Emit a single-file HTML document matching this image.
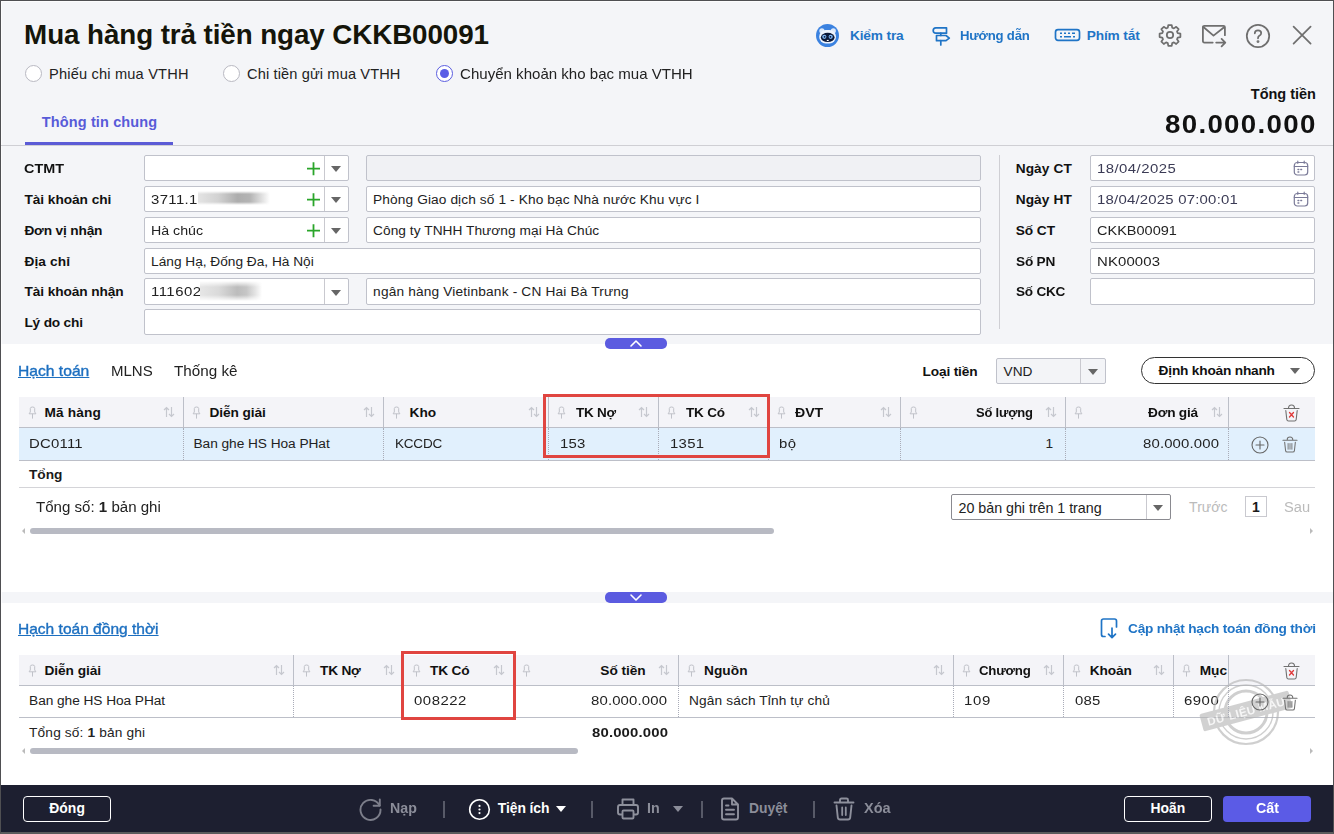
<!DOCTYPE html>
<html lang="vi"><head><meta charset="utf-8"><title>Mua hàng trả tiền ngay</title>
<style>
*{box-sizing:border-box;margin:0;padding:0}
html,body{width:1334px;height:834px;overflow:hidden;background:#f4f5f8}
body{font-family:"Liberation Sans",sans-serif;color:#1a1a1a;font-size:14px;position:relative}
.a{position:absolute;white-space:nowrap}
.b{font-weight:bold}
#frame{position:absolute;left:0;top:0;width:1334px;height:834px;border:1px solid #4f4f52;border-bottom:2px solid #5a5a5c;pointer-events:none;z-index:50}
.title{left:25px;top:19px;font-size:27.800px;font-weight:bold;color:#15150a;line-height:32px}
.radio{width:17px;height:17px;border-radius:50%;border:1px solid #b9b9c2;background:#fff}
.radio.on{border:1.5px solid #5a5de0}
.radio.on:after{content:"";position:absolute;left:2.500px;top:2.800px;width:9px;height:9px;border-radius:50%;background:#5a5de6}
.rl{font-size:14.600px;line-height:20px;color:#222}
.tl{font-size:13.700px;font-weight:bold;color:#1f74c6;line-height:20px}
.lbl{font-size:13.700px;font-weight:bold;line-height:20px;color:#111}
.inp{background:#fff;border:1px solid #c0c2cb;border-radius:2px;height:26px}
.inp.dis{background:#f0f1f4}
.sep{width:1px;background:#c9c9cf}
.tri{width:0;height:0;border-left:5px solid transparent;border-right:5px solid transparent;border-top:6px solid #666}
.white{background:#fff}
.lbl,.it{margin-top:.6px}
.th{margin-top:1px}
.th{font-size:13.700px;font-weight:bold;line-height:30px;color:#111}
.td{font-size:13.700px;line-height:32px;color:#222}
.vl{width:1px;background:#bcbfc8}
.dl{width:0;border-left:1px dotted #a9acb8}
.hl{height:1px;background:#bcbfc8}
.it{font-size:13.700px;line-height:26px;color:#222}
.fb{font-size:13.900px;font-weight:bold;line-height:20px}
</style></head><body>
<div id="frame"></div>
<div class="a" style="left:1px;top:1px;width:1332px;height:1px;background:#fcfcfd"></div><div class="a" style="left:1px;top:1px;width:1px;height:784px;background:#fcfcfd"></div>

<!-- header -->
<div class="a title" style="right: auto; width: auto; text-align: left; padding-left: 0px; letter-spacing: -0.1px; left: 24.1px;">Mua hàng trả tiền ngay CKKB00091</div>

<div class="a radio" style="left:25px;top:65px"></div><div class="a rl" style="left: 49.1px; top: 64px; right: auto; width: auto; text-align: left; padding-left: 0px; letter-spacing: 0.18px;">Phiếu chi mua VTHH</div>
<div class="a radio" style="left:223px;top:65px"></div><div class="a rl" style="left: 247.1px; top: 64px; right: auto; width: auto; text-align: left; padding-left: 0px; letter-spacing: 0.12px;">Chi tiền gửi mua VTHH</div>
<div class="a radio on" style="left:436px;top:65px"></div><div class="a rl" style="left: 459.8px; top: 64px; right: auto; width: auto; text-align: left; padding-left: 0px; letter-spacing: 0px; transform-origin: 0px 50%; transform: scaleX(1.032);">Chuyển khoản kho bạc mua VTHH</div>

<div class="a b" style="left: 41.8px; top: 112px; font-size: 14.5px; line-height: 20px; color: rgb(88, 91, 216); right: auto; width: auto; text-align: left; padding-left: 0px; letter-spacing: 0.13px;">Thông tin chung</div>
<div class="a" style="left:25px;top:142px;width:148px;height:3px;background:#5b5bd6"></div>
<div class="a" style="left:1px;top:145px;width:1332px;height:1px;background:#cfcfd4"></div>

<div class="a b" style="right: auto; top: 84px; font-size: 14.5px; line-height: 20px; color: rgb(17, 17, 17); width: auto; text-align: left; padding-left: 0px; letter-spacing: -0.02px; left: 1250.8px;">Tổng tiền</div>
<div class="a b" style="right: auto; top: 108.2px; font-size: 25.4px; line-height: 32px; color: rgb(17, 17, 17); width: auto; text-align: left; padding-left: 0px; letter-spacing: 1.2px; transform-origin: 0px 50%; transform: scaleX(1.09); left: 1164.9px;">80.000.000</div>

<!-- toolbar -->
<svg class="a" style="left:816px;top:24px" width="23" height="23" viewBox="0 0 23 23"><circle cx="11.500" cy="11.500" r="11.500" fill="#3b82e0"></circle><circle cx="5.900" cy="6.800" r="2.600" fill="#dbe8fa"></circle><circle cx="17.300" cy="6.800" r="2.600" fill="#dbe8fa"></circle><rect x="3.200" y="6" width="16.800" height="13.400" rx="6.500" fill="#eef4fd"></rect><ellipse cx="11.700" cy="13.400" rx="6.900" ry="4.600" fill="#0b1838"></ellipse><circle cx="8.300" cy="12.800" r="2.100" fill="#7fb8f5"></circle><circle cx="14.700" cy="12.800" r="2.100" fill="#7fb8f5"></circle><circle cx="8.600" cy="12.800" r="0.900" fill="#0b1838"></circle><circle cx="14.400" cy="12.800" r="0.900" fill="#0b1838"></circle><rect x="10.800" y="15.900" width="1.900" height="1.100" fill="#fff"></rect></svg>
<div class="a tl" style="left: 849.9px; top: 26px; right: auto; width: auto; text-align: left; padding-left: 0px; letter-spacing: -0.14px;">Kiểm tra</div>
<svg class="a" style="left:930px;top:25px" width="22" height="22" viewBox="0 0 22 22" fill="none" stroke="#1f74c6" stroke-width="1.700" stroke-linejoin="round" stroke-linecap="round"><path d="M5.800 2.800H16.500V8.200H5.800Q3.200 8.200 3.200 5.500Q3.200 2.800 5.800 2.800Z"></path><path d="M6.500 10.500H16L19.300 13.100L16 15.700H6.500Z"></path><path d="M10.800 8.200V10.500M10.800 15.700V20"></path></svg>
<div class="a tl" style="left: 960.3px; top: 26px; right: auto; width: auto; text-align: left; padding-left: 0px; letter-spacing: -0.22px; transform-origin: 0px 50%; transform: scaleX(0.961);">Hướng dẫn</div>
<svg class="a" style="left:1054px;top:28px" width="27" height="14" viewBox="0 0 27 14" fill="none" stroke="#1f74c6" stroke-width="1.7"><rect x="1.500" y="1.700" width="24" height="10.600" rx="2.500"></rect><path d="M6 5.200h2M10 5.200h2M14 5.200h2M18 5.200h3M6 8.800h2M10 8.800h7M19 8.800h2" stroke-width="1.600"></path></svg>
<div class="a tl" style="left: 1086.7px; top: 26px; right: auto; width: auto; text-align: left; padding-left: 0px; letter-spacing: -0.14px;">Phím tắt</div>
<svg class="a" style="left:1158px;top:23px" width="24" height="24" viewBox="0 0 24 24" fill="none" stroke="#6f6f6f" stroke-width="1.750" stroke-linejoin="round"><circle cx="12" cy="12" r="3.200"></circle><path d="M10.300 2h3.400l.5 2.700 1.700.7 2.300-1.600 2.400 2.400-1.600 2.300.7 1.700 2.700.5v3.400l-2.700.5-.7 1.700 1.600 2.300-2.400 2.400-2.300-1.600-1.700.7-.5 2.700h-3.400l-.5-2.700-1.700-.7-2.300 1.600-2.400-2.400 1.600-2.300-.7-1.700-2.700-.5v-3.400l2.700-.5.7-1.700-1.600-2.300 2.400-2.400 2.300 1.600 1.700-.7z"></path></svg>
<svg class="a" style="left:1201px;top:24px" width="27" height="24" viewBox="0 0 27 24" fill="none" stroke="#6f6f6f" stroke-width="1.800" stroke-linejoin="round" stroke-linecap="round"><path d="M11.700 18.600H3.400Q1.900 18.600 1.900 17.100V3.300Q1.900 1.800 3.400 1.800H22.400Q23.900 1.800 23.900 3.300V11.200"></path><path d="M2.400 3L12.500 11.600L23.400 3"></path><path d="M15.200 18.600H24.200M20.600 14.900L24.300 18.600L20.600 22.300"></path></svg>
<svg class="a" style="left:1245px;top:23px" width="26" height="26" viewBox="0 0 26 26" fill="none" stroke="#6f6f6f" stroke-width="1.750" stroke-linecap="round"><circle cx="13" cy="13" r="11.200"></circle><path d="M9.800 10.300Q9.800 7.300 13 7.300Q16.200 7.300 16.200 10Q16.200 11.800 14.300 12.800Q13 13.500 13 15.300"></path><circle cx="13" cy="18.600" r="0.600" fill="#6f6f6f"></circle></svg>
<svg class="a" style="left:1291px;top:24px" width="22" height="22" viewBox="0 0 22 22" fill="none" stroke="#6f6f6f" stroke-width="1.750" stroke-linecap="round"><path d="M2.600 2.600L19.600 19.600M19.600 2.600L2.600 19.600"></path></svg>

<!-- form left -->
<div class="a lbl" style="left: 24.4px; top: 158px; right: auto; width: auto; text-align: left; padding-left: 0px; letter-spacing: 0px; transform-origin: 0px 50%; transform: scaleX(1.052);">CTMT</div>
<div class="a lbl" style="left: 24.4px; top: 189px; right: auto; width: auto; text-align: left; padding-left: 0px; letter-spacing: -0.04px;">Tài khoản chi</div>
<div class="a lbl" style="left: 24.4px; top: 220px; right: auto; width: auto; text-align: left; padding-left: 0px; letter-spacing: -0.16px;">Đơn vị nhận</div>
<div class="a lbl" style="left: 24.4px; top: 251px; right: auto; width: auto; text-align: left; padding-left: 0px; letter-spacing: 0.13px;">Địa chỉ</div>
<div class="a lbl" style="left: 24.4px; top: 281.4px; right: auto; width: auto; text-align: left; padding-left: 0px; letter-spacing: -0.08px;">Tài khoản nhận</div>
<div class="a lbl" style="left: 24.4px; top: 312px; right: auto; width: auto; text-align: left; padding-left: 0px; letter-spacing: -0.18px;">Lý do chi</div>

<div class="a inp" style="left:144px;top:155px;width:205px"></div>
<div class="a inp" style="left:144px;top:186px;width:205px"></div><div class="a it" style="left: 151.1px; top: 186px; right: auto; width: auto; text-align: left; padding-left: 0px; letter-spacing: 0.34px; transform-origin: 0px 50%; transform: scaleX(1.09);">3711.1</div>
<div class="a inp" style="left:144px;top:217px;width:205px"></div><div class="a it" style="left: 151.1px; top: 217px; right: auto; width: auto; text-align: left; padding-left: 0px; letter-spacing: 0px; transform-origin: 0px 50%; transform: scaleX(1.037);">Hà chúc</div>
<div class="a inp" style="left:144px;top:248px;width:837px"></div><div class="a it" style="left: 151.1px; top: 248px; right: auto; width: auto; text-align: left; padding-left: 0px; letter-spacing: -0.01px;">Láng Hạ, Đống Đa, Hà Nội</div>
<div class="a inp" style="left:144px;top:278px;width:205px;height:27px"></div><div class="a it" style="left: 151.1px; top: 278px; right: auto; width: auto; text-align: left; padding-left: 0px; letter-spacing: 0.45px; transform-origin: 0px 50%; transform: scaleX(1.09);">111602</div>
<div class="a inp" style="left:144px;top:309px;width:837px"></div>

<div class="a inp dis" style="left:366px;top:155px;width:615px"></div>
<div class="a inp" style="left:366px;top:186px;width:615px"></div><div class="a it" style="left: 373.1px; top: 186px; right: auto; width: auto; text-align: left; padding-left: 0px; letter-spacing: 0.11px;">Phòng Giao dịch số 1 - Kho bạc Nhà nước Khu vực I</div>
<div class="a inp" style="left:366px;top:217px;width:615px"></div><div class="a it" style="left: 373.1px; top: 217px; right: auto; width: auto; text-align: left; padding-left: 0px; letter-spacing: 0.05px;">Công ty TNHH Thương mại Hà Chúc</div>
<div class="a inp" style="left:366px;top:278px;width:615px;height:27px"></div><div class="a it" style="left: 373.1px; top: 278px; right: auto; width: auto; text-align: left; padding-left: 0px; letter-spacing: 0.17px;">ngân hàng Vietinbank - CN Hai Bà Trưng</div>

<!-- blur blobs -->
<div class="a" style="left:198px;top:191px;width:72px;height:14px;background:linear-gradient(90deg,#e4e4e4 0,#d2d2d2 28%,#adadad 55%,#b4b4b4 72%,#dedede 88%,rgba(255,255,255,0) 100%);-webkit-mask-image:linear-gradient(180deg,transparent 0,#000 22%,#000 78%,transparent 100%);mask-image:linear-gradient(180deg,transparent 0,#000 22%,#000 78%,transparent 100%)"></div>
<div class="a" style="left:200px;top:280.500px;width:62px;height:20px;background:linear-gradient(90deg,#e6e6e6 0,#dadada 30%,#bcbcbc 60%,#c6c6c6 75%,#e6e6e6 90%,rgba(255,255,255,0) 100%);-webkit-mask-image:linear-gradient(180deg,transparent 0,#000 30%,#000 70%,transparent 100%);mask-image:linear-gradient(180deg,transparent 0,#000 30%,#000 70%,transparent 100%)"></div>

<!-- combo parts -->
<div class="a sep" style="left:324px;top:156px;height:24px"></div>
<div class="a sep" style="left:324px;top:187px;height:24px"></div>
<div class="a sep" style="left:324px;top:218px;height:24px"></div>
<div class="a sep" style="left:324px;top:279px;height:25px"></div>
<div class="a tri" style="left:331px;top:166px"></div>
<div class="a tri" style="left:331px;top:197px"></div>
<div class="a tri" style="left:331px;top:228px"></div>
<div class="a tri" style="left:331px;top:289.500px"></div>
<svg class="a" style="left:306px;top:161px" width="15" height="15" viewBox="0 0 15 15" stroke="#2aa52a" stroke-width="1.800"><path d="M7.500 1.200V14.300M1 7.700H14"></path></svg>
<svg class="a" style="left:306px;top:192px" width="15" height="15" viewBox="0 0 15 15" stroke="#2aa52a" stroke-width="1.800"><path d="M7.500 1.200V14.300M1 7.700H14"></path></svg>
<svg class="a" style="left:306px;top:223px" width="15" height="15" viewBox="0 0 15 15" stroke="#2aa52a" stroke-width="1.800"><path d="M7.500 1.200V14.300M1 7.700H14"></path></svg>

<!-- form right -->
<div class="a sep" style="left:999px;top:155px;height:174px;background:#cfcfd4"></div>
<div class="a lbl" style="left: 1015.7px; top: 158px; right: auto; width: auto; text-align: left; padding-left: 0px; letter-spacing: 0.09px;">Ngày CT</div>
<div class="a lbl" style="left: 1015.7px; top: 189px; right: auto; width: auto; text-align: left; padding-left: 0px; letter-spacing: 0.09px;">Ngày HT</div>
<div class="a lbl" style="left: 1015.7px; top: 220px; right: auto; width: auto; text-align: left; padding-left: 0px; letter-spacing: -0.06px;">Số CT</div>
<div class="a lbl" style="left: 1015.7px; top: 251px; right: auto; width: auto; text-align: left; padding-left: 0px; letter-spacing: -0.22px; transform-origin: 0px 50%; transform: scaleX(0.997);">Số PN</div>
<div class="a lbl" style="left: 1015.7px; top: 281.4px; right: auto; width: auto; text-align: left; padding-left: 0px; letter-spacing: -0.22px; transform-origin: 0px 50%; transform: scaleX(0.991);">Số CKC</div>
<div class="a inp" style="left:1090px;top:155px;width:225px;"></div><div class="a it" style="left: 1096.7px; top: 155px; color: rgb(59, 59, 85); right: auto; width: auto; text-align: left; padding-left: 0px; letter-spacing: 0.42px; transform-origin: 0px 50%; transform: scaleX(1.09);">18/04/2025</div>
<div class="a inp" style="left:1090px;top:186px;width:225px;"></div><div class="a it" style="left: 1096.7px; top: 186px; color: rgb(59, 59, 85); right: auto; width: auto; text-align: left; padding-left: 0px; letter-spacing: 0.2px; transform-origin: 0px 50%; transform: scaleX(1.09);">18/04/2025 07:00:01</div>
<div class="a inp" style="left:1090px;top:217px;width:225px"></div><div class="a it" style="left: 1096.5px; top: 217px; right: auto; width: auto; text-align: left; padding-left: 0px; letter-spacing: 0px; transform-origin: 0px 50%; transform: scaleX(1.06);">CKKB00091</div>
<div class="a inp" style="left:1090px;top:248px;width:225px"></div><div class="a it" style="left: 1096.5px; top: 248px; right: auto; width: auto; text-align: left; padding-left: 0px; letter-spacing: 0.12px; transform-origin: 0px 50%; transform: scaleX(1.09);">NK00003</div>
<div class="a inp" style="left:1090px;top:278px;width:225px;height:27px"></div>
<svg class="a cal" style="left:1293px;top:160px" width="16" height="16" viewBox="0 0 16 16" fill="none" stroke="#7a7a98" stroke-width="1.200" stroke-linecap="round"><rect x="1.300" y="2.500" width="13.400" height="12.500" rx="3"></rect><path d="M1.300 6.500H14.700M4.800 1.200V3.300M11.200 1.200V3.300"></path><path d="M5 9.500h.8M7.800 9.500h.8M5 12h.8" stroke-width="1.400"></path></svg>
<svg class="a cal" style="left:1293px;top:191px" width="16" height="16" viewBox="0 0 16 16" fill="none" stroke="#7a7a98" stroke-width="1.200" stroke-linecap="round"><rect x="1.300" y="2.500" width="13.400" height="12.500" rx="3"></rect><path d="M1.300 6.500H14.700M4.800 1.200V3.300M11.200 1.200V3.300"></path><path d="M5 9.500h.8M7.800 9.500h.8M5 12h.8" stroke-width="1.400"></path></svg>

<!-- white area 1 -->
<div class="a white" style="left:1px;top:344px;width:1332px;height:248px"></div>
<div class="a" style="left:605px;top:338px;width:62px;height:11px;border-radius:5px;background:#5b5be0"></div>
<svg class="a" style="left:629px;top:339px" width="14" height="9" viewBox="0 0 14 9" fill="none" stroke="#fff" stroke-width="1.600" stroke-linecap="round" stroke-linejoin="round"><path d="M2 7L7 2L12 7"></path></svg>

<div class="a" style="left: 18.1px; top: 361px; font-size: 14.5px; line-height: 20px; color: rgb(28, 111, 192); text-decoration: underline; -webkit-text-stroke: 0.35px rgb(28, 111, 192); right: auto; width: auto; text-align: left; padding-left: 0px; letter-spacing: 0px; transform-origin: 0px 50%; transform: scaleX(1.079);">Hạch toán</div>
<div class="a" style="left: 110.5px; top: 361px; font-size: 14.5px; line-height: 20px; color: rgb(34, 34, 34); right: auto; width: auto; text-align: left; padding-left: 0px; letter-spacing: 0px; transform-origin: 0px 50%; transform: scaleX(1.035);">MLNS</div>
<div class="a" style="left: 173.9px; top: 361px; font-size: 14.5px; line-height: 20px; color: rgb(34, 34, 34); right: auto; width: auto; text-align: left; padding-left: 0px; letter-spacing: 0px; transform-origin: 0px 50%; transform: scaleX(1.05);">Thống kê</div>

<div class="a lbl" style="left: 922.6px; top: 361px; right: auto; width: auto; text-align: left; padding-left: 0px; letter-spacing: -0.17px;">Loại tiền</div>
<div class="a inp" style="left:996px;top:358px;width:110px;background:#f3f4f7"></div><div class="a it" style="left: 1003.6px; top: 358px; right: auto; width: auto; text-align: left; padding-left: 0px; letter-spacing: 0px;">VND</div>
<div class="a sep" style="left:1080px;top:359px;height:24px"></div>
<div class="a tri" style="left:1088px;top:369px"></div>
<div class="a" style="left:1141px;top:357px;width:174px;height:27px;border:1px solid #333;border-radius:14px;background:#fff"></div>
<div class="a lbl" style="left: 1158.6px; top: 360px; right: auto; width: auto; text-align: left; padding-left: 0px; letter-spacing: -0.2px;">Định khoản nhanh</div>
<div class="a tri" style="left:1290px;top:368px"></div>

<!-- table 1 -->
<div class="a" style="left:19px;top:397px;width:1296px;height:30px;background:#f4f4f8"></div>
<div class="a" style="left:19px;top:428px;width:1296px;height:32px;background:#e1f0fd"></div>
<div class="a hl" style="left:19px;top:427px;width:1296px"></div>
<div class="a hl" style="left:19px;top:460px;width:1296px"></div>
<div class="a hl" style="left:19px;top:487px;width:1296px;background:#d4d4d8"></div>
<!--T1-->
<svg class="a" style="left:28px;top:406px" width="9" height="13" viewBox="0 0 9 13" fill="none" stroke="#c0c2c9" stroke-width="1"><path d="M2.300 2.500Q2.300 1 4.500 1Q6.700 1 6.700 2.500V6L7.900 7.800H1.100L2.300 6ZM4.500 7.800V12.600"></path></svg>
<div class="a th" style="left: 44.4px; top: 397px; right: auto; width: auto; text-align: left; padding-left: 0px; letter-spacing: 0.16px;">Mã hàng</div>
<svg class="a" style="left:163.3px;top:406px" width="12" height="12" viewBox="0 0 12 12" fill="none" stroke="#c6c8cf" stroke-width="1.200"><path d="M3.500 11V1.500M1 4L3.500 1.500L6 4M8.500 1V10.500M6 8L8.500 10.500L11 8"></path></svg>
<div class="a td" style="left: 28.9px; top: 428px; right: auto; width: auto; text-align: left; padding-left: 0px; letter-spacing: 0.2px; transform-origin: 0px 50%; transform: scaleX(1.09);">DC0111</div>
<svg class="a" style="left:192px;top:406px" width="9" height="13" viewBox="0 0 9 13" fill="none" stroke="#c0c2c9" stroke-width="1"><path d="M2.300 2.500Q2.300 1 4.500 1Q6.700 1 6.700 2.500V6L7.900 7.800H1.100L2.300 6ZM4.500 7.800V12.600"></path></svg>
<div class="a th" style="left: 209.4px; top: 397px; right: auto; width: auto; text-align: left; padding-left: 0px; letter-spacing: -0.07px;">Diễn giải</div>
<svg class="a" style="left:363.3px;top:406px" width="12" height="12" viewBox="0 0 12 12" fill="none" stroke="#c6c8cf" stroke-width="1.200"><path d="M3.500 11V1.500M1 4L3.500 1.500L6 4M8.500 1V10.500M6 8L8.500 10.500L11 8"></path></svg>
<div class="a td" style="left: 193.5px; top: 428px; right: auto; width: auto; text-align: left; padding-left: 0px; letter-spacing: -0.04px;">Ban ghe HS Hoa PHat</div>
<svg class="a" style="left:392px;top:406px" width="9" height="13" viewBox="0 0 9 13" fill="none" stroke="#c0c2c9" stroke-width="1"><path d="M2.300 2.500Q2.300 1 4.500 1Q6.700 1 6.700 2.500V6L7.900 7.800H1.100L2.300 6ZM4.500 7.800V12.600"></path></svg>
<div class="a th" style="left: 409.6px; top: 397px; right: auto; width: auto; text-align: left; padding-left: 0px; letter-spacing: -0.05px;">Kho</div>
<svg class="a" style="left:528.3px;top:406px" width="12" height="12" viewBox="0 0 12 12" fill="none" stroke="#c6c8cf" stroke-width="1.200"><path d="M3.500 11V1.500M1 4L3.500 1.500L6 4M8.500 1V10.500M6 8L8.500 10.500L11 8"></path></svg>
<div class="a td" style="left: 394.6px; top: 428px; right: auto; width: auto; text-align: left; padding-left: 0px; letter-spacing: -0.22px; transform-origin: 0px 50%; transform: scaleX(0.988);">KCCDC</div>
<svg class="a" style="left:557px;top:406px" width="9" height="13" viewBox="0 0 9 13" fill="none" stroke="#c0c2c9" stroke-width="1"><path d="M2.300 2.500Q2.300 1 4.500 1Q6.700 1 6.700 2.500V6L7.900 7.800H1.100L2.300 6ZM4.500 7.800V12.600"></path></svg>
<div class="a th" style="left: 575.6px; top: 397px; right: auto; width: auto; text-align: left; padding-left: 0px; letter-spacing: -0.22px; transform-origin: 0px 50%; transform: scaleX(0.985);">TK Nợ</div>
<svg class="a" style="left:638.3px;top:406px" width="12" height="12" viewBox="0 0 12 12" fill="none" stroke="#c6c8cf" stroke-width="1.200"><path d="M3.500 11V1.500M1 4L3.500 1.500L6 4M8.500 1V10.500M6 8L8.500 10.500L11 8"></path></svg>
<div class="a td" style="left: 559.9px; top: 428px; right: auto; width: auto; text-align: left; padding-left: 0px; letter-spacing: 0.23px; transform-origin: 0px 50%; transform: scaleX(1.09);">153</div>
<svg class="a" style="left:667px;top:406px" width="9" height="13" viewBox="0 0 9 13" fill="none" stroke="#c0c2c9" stroke-width="1"><path d="M2.300 2.500Q2.300 1 4.500 1Q6.700 1 6.700 2.500V6L7.900 7.800H1.100L2.300 6ZM4.500 7.800V12.600"></path></svg>
<div class="a th" style="left: 685.8px; top: 397px; right: auto; width: auto; text-align: left; padding-left: 0px; letter-spacing: -0.22px; transform-origin: 0px 50%; transform: scaleX(0.989);">TK Có</div>
<svg class="a" style="left:748.3px;top:406px" width="12" height="12" viewBox="0 0 12 12" fill="none" stroke="#c6c8cf" stroke-width="1.200"><path d="M3.500 11V1.500M1 4L3.500 1.500L6 4M8.500 1V10.500M6 8L8.500 10.500L11 8"></path></svg>
<div class="a td" style="left: 669.5px; top: 428px; right: auto; width: auto; text-align: left; padding-left: 0px; letter-spacing: 0.25px; transform-origin: 0px 50%; transform: scaleX(1.09);">1351</div>
<svg class="a" style="left:777px;top:406px" width="9" height="13" viewBox="0 0 9 13" fill="none" stroke="#c0c2c9" stroke-width="1"><path d="M2.300 2.500Q2.300 1 4.500 1Q6.700 1 6.700 2.500V6L7.900 7.800H1.100L2.300 6ZM4.500 7.800V12.600"></path></svg>
<div class="a th" style="left: 795px; top: 397px; right: auto; width: auto; text-align: left; padding-left: 0px; letter-spacing: 0px; transform-origin: 0px 50%; transform: scaleX(1.03);">ĐVT</div>
<svg class="a" style="left:880.3px;top:406px" width="12" height="12" viewBox="0 0 12 12" fill="none" stroke="#c6c8cf" stroke-width="1.200"><path d="M3.500 11V1.500M1 4L3.500 1.500L6 4M8.500 1V10.500M6 8L8.500 10.500L11 8"></path></svg>
<div class="a td" style="left: 779.1px; top: 428px; right: auto; width: auto; text-align: left; padding-left: 0px; letter-spacing: 0.36px; transform-origin: 0px 50%; transform: scaleX(1.09);">bộ</div>
<svg class="a" style="left:909px;top:406px" width="9" height="13" viewBox="0 0 9 13" fill="none" stroke="#c0c2c9" stroke-width="1"><path d="M2.300 2.500Q2.300 1 4.500 1Q6.700 1 6.700 2.500V6L7.900 7.800H1.100L2.300 6ZM4.500 7.800V12.600"></path></svg>
<div class="a th" style="left: 975.7px; width: auto; top: 397px; text-align: left; right: auto; padding-left: 0px; letter-spacing: -0.22px; transform-origin: 0px 50%; transform: scaleX(0.948);">Số lượng</div>
<svg class="a" style="left:1045.3px;top:406px" width="12" height="12" viewBox="0 0 12 12" fill="none" stroke="#c6c8cf" stroke-width="1.200"><path d="M3.500 11V1.500M1 4L3.500 1.500L6 4M8.500 1V10.500M6 8L8.500 10.500L11 8"></path></svg>
<div class="a td" style="left: 1045.4px; width: auto; top: 428px; text-align: left; right: auto; padding-left: 0px; letter-spacing: 0px;">1</div>
<svg class="a" style="left:1074px;top:406px" width="9" height="13" viewBox="0 0 9 13" fill="none" stroke="#c0c2c9" stroke-width="1"><path d="M2.300 2.500Q2.300 1 4.500 1Q6.700 1 6.700 2.500V6L7.900 7.800H1.100L2.300 6ZM4.500 7.800V12.600"></path></svg>
<div class="a th" style="left: 1148.1px; width: auto; top: 397px; text-align: left; right: auto; padding-left: 0px; letter-spacing: -0.22px; transform-origin: 0px 50%; transform: scaleX(0.999);">Đơn giá</div>
<svg class="a" style="left:1210.5px;top:406px" width="12" height="12" viewBox="0 0 12 12" fill="none" stroke="#c6c8cf" stroke-width="1.200"><path d="M3.500 11V1.500M1 4L3.500 1.500L6 4M8.500 1V10.500M6 8L8.500 10.500L11 8"></path></svg>
<div class="a td" style="left: 1143.1px; width: auto; top: 428px; text-align: left; right: auto; padding-left: 0px; letter-spacing: 0.13px; transform-origin: 0px 50%; transform: scaleX(1.09);">80.000.000</div>
<div class="a vl" style="left:183px;top:397px;height:30px"></div>
<div class="a dl" style="left:183px;top:428px;height:32px"></div>
<div class="a vl" style="left:383px;top:397px;height:30px"></div>
<div class="a dl" style="left:383px;top:428px;height:32px"></div>
<div class="a vl" style="left:548px;top:397px;height:30px"></div>
<div class="a dl" style="left:548px;top:428px;height:32px"></div>
<div class="a vl" style="left:658px;top:397px;height:30px"></div>
<div class="a dl" style="left:658px;top:428px;height:32px"></div>
<div class="a vl" style="left:768px;top:397px;height:30px"></div>
<div class="a dl" style="left:768px;top:428px;height:32px"></div>
<div class="a vl" style="left:900px;top:397px;height:30px"></div>
<div class="a dl" style="left:900px;top:428px;height:32px"></div>
<div class="a vl" style="left:1065px;top:397px;height:30px"></div>
<div class="a dl" style="left:1065px;top:428px;height:32px"></div>
<div class="a vl" style="left:1228px;top:397px;height:30px"></div><div class="a dl" style="left:1228px;top:428px;height:32px"></div>
<svg class="a" style="left:1282.5px;top:404px" width="17" height="18" viewBox="0 0 17 18" fill="none" stroke="#707070" stroke-width="1.100" stroke-linecap="round" stroke-linejoin="round"><path d="M1 4.500H16M5.500 4.200Q5.500 1 8.500 1Q11.500 1 11.500 4.200M2.800 6.500L3.800 15.500Q4 17 5.500 17H11.500Q13 17 13.200 15.500L14.200 6.500"></path><path d="M6.500 8.500L10.500 13M10.500 8.500L6.500 13" stroke="#e03a3a" stroke-width="1.300"></path></svg>
<svg class="a" style="left:1250.5px;top:435.5px" width="18" height="18" viewBox="0 0 18 18" fill="none" stroke="#666" stroke-width="1.100" stroke-linecap="round"><circle cx="9" cy="9" r="8"></circle><path d="M9 5V13M5 9H13"></path></svg>
<svg class="a" style="left:1282px;top:436px" width="16" height="17" viewBox="0 0 17 18" fill="none" stroke="#707070" stroke-width="1.100" stroke-linecap="round" stroke-linejoin="round"><path d="M1 4.500H16M5.500 4.200Q5.500 1 8.500 1Q11.500 1 11.500 4.200M2.800 6.500L3.800 15.500Q4 17 5.500 17H11.500Q13 17 13.200 15.500L14.200 6.500"></path><path d="M6.500 8V14M8.500 8V14M10.500 8V14" stroke-width="1"></path></svg>
<!--/T1-->
<div class="a b" style="left: 29.1px; top: 464.5px; font-size: 13.7px; line-height: 20px; right: auto; width: auto; text-align: left; padding-left: 0px; letter-spacing: -0.08px;">Tổng</div>

<div class="a" style="left: 35.9px; top: 497px; font-size: 14px; line-height: 20px; color: rgb(34, 34, 34); right: auto; width: auto; text-align: left; padding-left: 0px; letter-spacing: 0px; transform-origin: 0px 50%; transform: scaleX(1.076);">Tổng số: <b>1</b> bản ghi</div>
<div class="a inp" style="left:951px;top:494px;width:220px;border-color:#8a8a90"></div><div class="a it" style="left: 958.6px; top: 494px; font-size: 14.3px; right: auto; width: auto; text-align: left; padding-left: 0px; letter-spacing: -0.04px;">20 bản ghi trên 1 trang</div>
<div class="a sep" style="left:1146px;top:495px;height:24px"></div>
<div class="a tri" style="left:1153px;top:505px"></div>
<div class="a" style="left: 1189.1px; top: 497px; font-size: 14px; line-height: 20px; color: rgb(187, 187, 187); right: auto; width: auto; text-align: left; padding-left: 0px; letter-spacing: 0.04px;">Trước</div>
<div class="a" style="left:1245px;top:496px;width:22px;height:21px;border:1px solid #c9c9cf;background:#fff"></div><div class="a b" style="left:1252px;top:497px;font-size:14px;line-height:20px">1</div>
<div class="a" style="left: 1283.7px; top: 497px; font-size: 14px; line-height: 20px; color: rgb(187, 187, 187); right: auto; width: auto; text-align: left; padding-left: 0px; letter-spacing: 0px; transform-origin: 0px 50%; transform: scaleX(1.047);">Sau</div>
<div class="a" style="left:30px;top:528px;width:744px;height:6px;border-radius:3px;background:#b8bac3"></div>
<div class="a" style="left:22px;top:528px;width:0;height:0;border-top:3px solid transparent;border-bottom:3px solid transparent;border-right:3px solid #bbb"></div>
<div class="a" style="left:1309.500px;top:528px;width:0;height:0;border-top:3px solid transparent;border-bottom:3px solid transparent;border-left:3px solid #bbb"></div>

<div class="a" style="left:543px;top:394px;width:227px;height:64px;border:3px solid #e04540"></div>

<!-- splitter 2 -->
<div class="a" style="left:605px;top:592px;width:62px;height:11px;border-radius:5px;background:#5b5be0"></div>
<svg class="a" style="left:629px;top:593px" width="14" height="9" viewBox="0 0 14 9" fill="none" stroke="#fff" stroke-width="1.600" stroke-linecap="round" stroke-linejoin="round"><path d="M2 2L7 7L12 2"></path></svg>

<!-- white area 2 -->
<div class="a white" style="left:1px;top:603px;width:1332px;height:182px"></div>
<div class="a b" style="left: 18.1px; top: 619px; font-size: 14.5px; line-height: 20px; color: rgb(28, 111, 192); text-decoration: underline; font-weight: normal; -webkit-text-stroke: 0.35px rgb(28, 111, 192); right: auto; width: auto; text-align: left; padding-left: 0px; letter-spacing: 0px; transform-origin: 0px 50%; transform: scaleX(1.071);">Hạch toán đồng thời</div>
<svg class="a" style="left:1098.700px;top:617.300px" width="22" height="23" viewBox="0 0 22 23" fill="none" stroke="#1f74c6" stroke-width="1.700" stroke-linecap="round" stroke-linejoin="round"><path d="M6 19.500H4.500Q2.500 19.500 2.500 17.500V4Q2.500 2 4.500 2H15.500Q17.500 2 17.500 4V10"></path><path d="M13 11V20.500M9.500 17.200L13 20.700L16.500 17.200"></path></svg>
<div class="a tl" style="left: 1128.1px; top: 618.6px; right: auto; width: auto; text-align: left; padding-left: 0px; letter-spacing: -0.22px; transform-origin: 0px 50%; transform: scaleX(0.997);">Cập nhật hạch toán đồng thời</div>

<div class="a" style="left:19px;top:655px;width:1296px;height:30px;background:#f4f4f8"></div>
<div class="a hl" style="left:19px;top:685px;width:1296px"></div>
<div class="a hl" style="left:19px;top:717px;width:1296px"></div>
<!--T2-->
<svg class="a" style="left:28px;top:664px" width="9" height="13" viewBox="0 0 9 13" fill="none" stroke="#c0c2c9" stroke-width="1"><path d="M2.300 2.500Q2.300 1 4.500 1Q6.700 1 6.700 2.500V6L7.900 7.800H1.100L2.300 6ZM4.500 7.800V12.600"></path></svg>
<div class="a th" style="left: 44.4px; top: 655px; right: auto; width: auto; text-align: left; padding-left: 0px; letter-spacing: -0.04px;">Diễn giải</div>
<svg class="a" style="left:273.3px;top:664px" width="12" height="12" viewBox="0 0 12 12" fill="none" stroke="#c6c8cf" stroke-width="1.200"><path d="M3.500 11V1.500M1 4L3.500 1.500L6 4M8.500 1V10.500M6 8L8.500 10.500L11 8"></path></svg>
<div class="a td" style="left: 29.1px; top: 684.5px; right: auto; width: auto; text-align: left; padding-left: 0px; letter-spacing: -0.05px;">Ban ghe HS Hoa PHat</div>
<svg class="a" style="left:302px;top:664px" width="9" height="13" viewBox="0 0 9 13" fill="none" stroke="#c0c2c9" stroke-width="1"><path d="M2.300 2.500Q2.300 1 4.500 1Q6.700 1 6.700 2.500V6L7.900 7.800H1.100L2.300 6ZM4.500 7.800V12.600"></path></svg>
<div class="a th" style="left: 320px; top: 655px; right: auto; width: auto; text-align: left; padding-left: 0px; letter-spacing: -0.22px;">TK Nợ</div>
<svg class="a" style="left:383.3px;top:664px" width="12" height="12" viewBox="0 0 12 12" fill="none" stroke="#c6c8cf" stroke-width="1.200"><path d="M3.500 11V1.500M1 4L3.500 1.500L6 4M8.500 1V10.500M6 8L8.500 10.500L11 8"></path></svg>
<svg class="a" style="left:412px;top:664px" width="9" height="13" viewBox="0 0 9 13" fill="none" stroke="#c0c2c9" stroke-width="1"><path d="M2.300 2.500Q2.300 1 4.500 1Q6.700 1 6.700 2.500V6L7.900 7.800H1.100L2.300 6ZM4.500 7.800V12.600"></path></svg>
<div class="a th" style="left: 430.1px; top: 655px; right: auto; width: auto; text-align: left; padding-left: 0px; letter-spacing: -0.22px; transform-origin: 0px 50%; transform: scaleX(1);">TK Có</div>
<svg class="a" style="left:493.3px;top:664px" width="12" height="12" viewBox="0 0 12 12" fill="none" stroke="#c6c8cf" stroke-width="1.200"><path d="M3.500 11V1.500M1 4L3.500 1.500L6 4M8.500 1V10.500M6 8L8.500 10.500L11 8"></path></svg>
<div class="a td" style="left: 413.9px; top: 684.5px; right: auto; width: auto; text-align: left; padding-left: 0px; letter-spacing: 0.48px; transform-origin: 0px 50%; transform: scaleX(1.09);">008222</div>
<svg class="a" style="left:522px;top:664px" width="9" height="13" viewBox="0 0 9 13" fill="none" stroke="#c0c2c9" stroke-width="1"><path d="M2.300 2.500Q2.300 1 4.500 1Q6.700 1 6.700 2.500V6L7.900 7.800H1.100L2.300 6ZM4.500 7.800V12.600"></path></svg>
<div class="a th" style="left: 600.3px; width: auto; top: 655px; text-align: left; right: auto; padding-left: 0px; letter-spacing: -0.04px;">Số tiền</div>
<svg class="a" style="left:658.3px;top:664px" width="12" height="12" viewBox="0 0 12 12" fill="none" stroke="#c6c8cf" stroke-width="1.200"><path d="M3.500 11V1.500M1 4L3.500 1.500L6 4M8.500 1V10.500M6 8L8.500 10.500L11 8"></path></svg>
<div class="a td" style="left: 590.8px; width: auto; top: 684.5px; text-align: left; right: auto; padding-left: 0px; letter-spacing: 0.13px; transform-origin: 0px 50%; transform: scaleX(1.09);">80.000.000</div>
<svg class="a" style="left:687px;top:664px" width="9" height="13" viewBox="0 0 9 13" fill="none" stroke="#c0c2c9" stroke-width="1"><path d="M2.300 2.500Q2.300 1 4.500 1Q6.700 1 6.700 2.500V6L7.900 7.800H1.100L2.300 6ZM4.500 7.800V12.600"></path></svg>
<div class="a th" style="left: 703.9px; top: 655px; right: auto; width: auto; text-align: left; padding-left: 0px; letter-spacing: 0.11px;">Nguồn</div>
<svg class="a" style="left:933.3px;top:664px" width="12" height="12" viewBox="0 0 12 12" fill="none" stroke="#c6c8cf" stroke-width="1.200"><path d="M3.500 11V1.500M1 4L3.500 1.500L6 4M8.500 1V10.500M6 8L8.500 10.500L11 8"></path></svg>
<div class="a td" style="left: 689.1px; top: 684.5px; right: auto; width: auto; text-align: left; padding-left: 0px; letter-spacing: 0.12px;">Ngân sách Tỉnh tự chủ</div>
<svg class="a" style="left:962px;top:664px" width="9" height="13" viewBox="0 0 9 13" fill="none" stroke="#c0c2c9" stroke-width="1"><path d="M2.300 2.500Q2.300 1 4.500 1Q6.700 1 6.700 2.500V6L7.900 7.800H1.100L2.300 6ZM4.500 7.800V12.600"></path></svg>
<div class="a th" style="left: 979.1px; top: 655px; right: auto; width: auto; text-align: left; padding-left: 0px; letter-spacing: -0.22px; transform-origin: 0px 50%; transform: scaleX(0.968);">Chương</div>
<svg class="a" style="left:1043.3px;top:664px" width="12" height="12" viewBox="0 0 12 12" fill="none" stroke="#c6c8cf" stroke-width="1.200"><path d="M3.500 11V1.500M1 4L3.500 1.500L6 4M8.500 1V10.500M6 8L8.500 10.500L11 8"></path></svg>
<div class="a td" style="left: 964.3px; top: 684.5px; right: auto; width: auto; text-align: left; padding-left: 0px; letter-spacing: 0.6px; transform-origin: 0px 50%; transform: scaleX(1.09);">109</div>
<svg class="a" style="left:1072px;top:664px" width="9" height="13" viewBox="0 0 9 13" fill="none" stroke="#c0c2c9" stroke-width="1"><path d="M2.300 2.500Q2.300 1 4.500 1Q6.700 1 6.700 2.500V6L7.900 7.800H1.100L2.300 6ZM4.500 7.800V12.600"></path></svg>
<div class="a th" style="left: 1089.7px; top: 655px; right: auto; width: auto; text-align: left; padding-left: 0px; letter-spacing: -0.1px;">Khoản</div>
<svg class="a" style="left:1153.3px;top:664px" width="12" height="12" viewBox="0 0 12 12" fill="none" stroke="#c6c8cf" stroke-width="1.200"><path d="M3.500 11V1.500M1 4L3.500 1.500L6 4M8.500 1V10.500M6 8L8.500 10.500L11 8"></path></svg>
<div class="a td" style="left: 1074.8px; top: 684.5px; right: auto; width: auto; text-align: left; padding-left: 0px; letter-spacing: 0.18px; transform-origin: 0px 50%; transform: scaleX(1.09);">085</div>
<svg class="a" style="left:1182px;top:664px" width="9" height="13" viewBox="0 0 9 13" fill="none" stroke="#c0c2c9" stroke-width="1"><path d="M2.300 2.500Q2.300 1 4.500 1Q6.700 1 6.700 2.500V6L7.900 7.800H1.100L2.300 6ZM4.500 7.800V12.600"></path></svg>
<div class="a th" style="left: 1199.7px; top: 655px; right: auto; width: auto; text-align: left; padding-left: 0px; letter-spacing: 0px;">Mục</div>
<div class="a td" style="left: 1184.3px; top: 684.5px; right: auto; width: auto; text-align: left; padding-left: 0px; letter-spacing: 0.46px; transform-origin: 0px 50%; transform: scaleX(1.09);">6900</div>
<div class="a vl" style="left:293px;top:655px;height:30px"></div>
<div class="a dl" style="left:293px;top:686px;height:31px"></div>
<div class="a vl" style="left:403px;top:655px;height:30px"></div>
<div class="a dl" style="left:403px;top:686px;height:31px"></div>
<div class="a vl" style="left:513px;top:655px;height:30px"></div>
<div class="a dl" style="left:513px;top:686px;height:31px"></div>
<div class="a vl" style="left:678px;top:655px;height:30px"></div>
<div class="a dl" style="left:678px;top:686px;height:31px"></div>
<div class="a vl" style="left:953px;top:655px;height:30px"></div>
<div class="a dl" style="left:953px;top:686px;height:31px"></div>
<div class="a vl" style="left:1063px;top:655px;height:30px"></div>
<div class="a dl" style="left:1063px;top:686px;height:31px"></div>
<div class="a vl" style="left:1173px;top:655px;height:30px"></div>
<div class="a dl" style="left:1173px;top:686px;height:31px"></div>
<div class="a" style="left:1229px;top:655px;width:86px;height:30px;background:#f4f4f8"></div><div class="a" style="left:1229px;top:686px;width:86px;height:31px;background:#fff"></div>
<svg class="a" style="left:1194px;top:664px;opacity:.62" width="100" height="96" viewBox="-50 -48 100 96"><g transform="translate(2,0)" fill="none" stroke="#b3b3b3"><circle r="32" stroke-width="2.200"></circle><circle r="27" stroke-width="1.400"></circle><circle r="21" stroke-width="3"></circle></g><g transform="translate(2,-1) rotate(-15)"><rect x="-46" y="-9" width="92" height="18" rx="2" fill="#b6b6b6"></rect><text x="0" y="4.500" text-anchor="middle" font-family="Liberation Sans, sans-serif" font-weight="bold" font-size="11.500" fill="#f2f2f2" letter-spacing=".3">DỮ LIỆU MẪU</text></g></svg>
<div class="a vl" style="left:1228px;top:655px;height:30px"></div><div class="a dl" style="left:1228px;top:686px;height:31px"></div>
<svg class="a" style="left:1282.5px;top:661.5px" width="17" height="18" viewBox="0 0 17 18" fill="none" stroke="#707070" stroke-width="1.100" stroke-linecap="round" stroke-linejoin="round"><path d="M1 4.500H16M5.500 4.200Q5.500 1 8.500 1Q11.500 1 11.500 4.200M2.800 6.500L3.800 15.500Q4 17 5.500 17H11.500Q13 17 13.200 15.500L14.200 6.500"></path><path d="M6.500 8.500L10.500 13M10.500 8.500L6.500 13" stroke="#e03a3a" stroke-width="1.300"></path></svg>
<svg class="a" style="left:1250.5px;top:693px" width="18" height="18" viewBox="0 0 18 18" fill="none" stroke="#666" stroke-width="1.100" stroke-linecap="round"><circle cx="9" cy="9" r="8"></circle><path d="M9 5V13M5 9H13"></path></svg>
<svg class="a" style="left:1282px;top:693.5px" width="16" height="17" viewBox="0 0 17 18" fill="none" stroke="#707070" stroke-width="1.100" stroke-linecap="round" stroke-linejoin="round"><path d="M1 4.500H16M5.500 4.200Q5.500 1 8.500 1Q11.500 1 11.500 4.200M2.800 6.500L3.800 15.500Q4 17 5.500 17H11.500Q13 17 13.200 15.500L14.200 6.500"></path><path d="M6.500 8V14M8.500 8V14M10.500 8V14" stroke-width="1"></path></svg>
<!--/T2-->
<div class="a" style="left: 29.1px; top: 722.5px; font-size: 13.7px; line-height: 20px; color: rgb(34, 34, 34); right: auto; width: auto; text-align: left; padding-left: 0px; letter-spacing: 0.15px;">Tổng số: <b>1</b> bản ghi</div>
<div class="a b" style="left: 591.8px; top: 722.5px; width: auto; text-align: left; font-size: 13.7px; line-height: 20px; right: auto; padding-left: 0px; letter-spacing: 0.13px; transform-origin: 0px 50%; transform: scaleX(1.09);">80.000.000</div>
<div class="a" style="left:30px;top:748px;width:548px;height:6px;border-radius:3px;background:#b8bac3"></div>
<div class="a" style="left:22px;top:748px;width:0;height:0;border-top:3px solid transparent;border-bottom:3px solid transparent;border-right:3px solid #bbb"></div>
<div class="a" style="left:1309.500px;top:748px;width:0;height:0;border-top:3px solid transparent;border-bottom:3px solid transparent;border-left:3px solid #bbb"></div>
<div class="a" style="left:401px;top:651px;width:115px;height:69px;border:3px solid #e04540"></div>

<!-- footer -->
<div class="a" style="left:1px;top:785px;width:1332px;height:48px;background:#1d1f30"></div>
<div class="a" style="left:23px;top:796px;width:88px;height:26px;border:1px solid #fff;border-radius:4px;color:#fff;text-align:center;line-height:24px"></div><div class="a fb" style="left: 49.3px; top: 795px; line-height: 26px; color: rgb(255, 255, 255); right: auto; width: auto; text-align: left; padding-left: 0px; letter-spacing: 0.03px;">Đóng</div>
<div class="a" style="left:1124px;top:796px;width:88px;height:26px;border:1px solid #fff;border-radius:4px;color:#fff;text-align:center;line-height:24px"></div><div class="a fb" style="left: 1150.5px; top: 795px; line-height: 26px; color: rgb(255, 255, 255); right: auto; width: auto; text-align: left; padding-left: 0px; letter-spacing: -0.01px;">Hoãn</div>
<div class="a" style="left:1223px;top:796px;width:88px;height:26px;border-radius:4px;background:#5b5be6;color:#fff;text-align:center;line-height:26px"></div><div class="a fb" style="left: 1255.6px; top: 795px; line-height: 26px; color: rgb(255, 255, 255); right: auto; width: auto; text-align: left; padding-left: 0px; letter-spacing: 0px; transform-origin: 0px 50%; transform: scaleX(1.023);">Cất</div>

<svg class="a" style="left:358px;top:797px" width="25" height="25" viewBox="0 0 25 25" fill="none" stroke="#7c7e8a" stroke-width="1.900" stroke-linecap="round" stroke-linejoin="round"><path d="M21.500 8.500A10 10 0 1 0 22.500 12.500"></path><path d="M21.800 2.500V8.700H15.600"></path></svg>
<div class="a fb" style="left: 390.1px; top: 798px; color: rgb(139, 141, 153); right: auto; width: auto; text-align: left; padding-left: 0px; letter-spacing: 0px; transform-origin: 0px 50%; transform: scaleX(1.021);">Nạp</div>
<div class="a" style="left:443px;top:801px;width:2px;height:17px;background:#585a68"></div>
<svg class="a" style="left:467.500px;top:797.500px" width="23" height="23" viewBox="0 0 23 23" fill="none" stroke="#fff" stroke-width="1.600"><circle cx="11.500" cy="11.500" r="9.800"></circle><g fill="#fff" stroke="none"><circle cx="11.500" cy="7.900" r="1.100"></circle><circle cx="11.500" cy="11.500" r="1.100"></circle><circle cx="11.500" cy="15.100" r="1.100"></circle></g></svg>
<div class="a fb" style="left: 497.8px; top: 798px; color: rgb(255, 255, 255); right: auto; width: auto; text-align: left; padding-left: 0px; letter-spacing: -0.08px;">Tiện ích</div>
<div class="a tri" style="left:556px;top:806px;border-top-color:#fff"></div>
<div class="a" style="left:591px;top:801px;width:2px;height:17px;background:#585a68"></div>
<svg class="a" style="left:616px;top:797px" width="24" height="24" viewBox="0 0 24 24" fill="none" stroke="#8e909c" stroke-width="1.900" stroke-linejoin="round"><path d="M6.500 8V2.500H17.500V8"></path><path d="M6.500 17.500H4Q2 17.500 2 15.500V10Q2 8 4 8H20Q22 8 22 10V15.500Q22 17.500 20 17.500H17.500"></path><rect x="6.500" y="13.500" width="11" height="8" rx="1"></rect></svg>
<div class="a fb" style="left: 646.8px; top: 798px; color: rgb(139, 141, 153); right: auto; width: auto; text-align: left; padding-left: 0px; letter-spacing: 0px; transform-origin: 0px 50%; transform: scaleX(1.028);">In</div>
<div class="a tri" style="left:673px;top:806px;border-top-color:#8b8d99"></div>
<div class="a" style="left:701px;top:801px;width:2px;height:17px;background:#585a68"></div>
<svg class="a" style="left:720px;top:797px" width="20" height="24" viewBox="0 0 20 24" fill="none" stroke="#8e909c" stroke-width="1.900" stroke-linejoin="round" stroke-linecap="round"><path d="M12 1.500H4Q2 1.500 2 3.500V20.500Q2 22.500 4 22.500H16Q18 22.500 18 20.500V7.500L12 1.500V7.500H18"></path><path d="M6 8.500H8.500M6 12.800H14M6 17.200H14"></path></svg>
<div class="a fb" style="left: 749.1px; top: 798px; color: rgb(139, 141, 153); right: auto; width: auto; text-align: left; padding-left: 0px; letter-spacing: -0.05px;">Duyệt</div>
<div class="a" style="left:813px;top:801px;width:2px;height:17px;background:#585a68"></div>
<svg class="a" style="left:833px;top:797px" width="22" height="24" viewBox="0 0 22 24" fill="none" stroke="#8e909c" stroke-width="1.900" stroke-linejoin="round" stroke-linecap="round"><path d="M1.500 5.500H20.500M7 5.200V3Q7 1.500 8.500 1.500H13.500Q15 1.500 15 3V5.200M3.500 8.500L4.800 20.500Q5 22.500 7 22.500H15Q17 22.500 17.200 20.500L18.500 8.500"></path><path d="M9.200 10.500V18M12.800 10.500V18" stroke-width="1.800"></path></svg>
<div class="a fb" style="left: 863.9px; top: 798px; color: rgb(139, 141, 153); right: auto; width: auto; text-align: left; padding-left: 0px; letter-spacing: 0px; transform-origin: 0px 50%; transform: scaleX(1.044);">Xóa</div>




</body></html>
